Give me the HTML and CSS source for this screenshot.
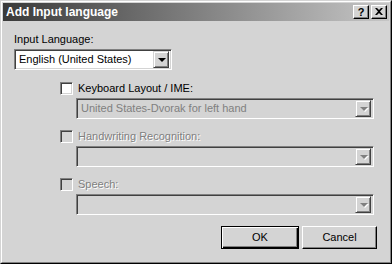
FILE: index.html
```html
<!DOCTYPE html>
<html>
<head>
<meta charset="utf-8">
<link rel="stylesheet" href="styles.css">
</head>
<body>
<div class="window">
  <div class="frame">
    <div class="titlebar">
      <span class="title">Add Input language</span>
      <div class="caption-btns">
        <div class="cap-btn">?</div>
        <div class="cap-btn close">
          <svg width="8" height="7" viewBox="0 0 8 7"><path d="M0 0h2l2 2 2-2h2L5 3.5 8 7H6L4 5 2 7H0l3-3.5z" fill="#000"/></svg>
        </div>
      </div>
    </div>
    <div class="content">
      <div class="label">Input Language:</div>
      <div class="combo lang">
        <span class="combo-text">English (United States)</span>
        <div class="drop"><span class="arrow"></span></div>
      </div>
      <div class="group">
        <div class="check-row">
          <span class="checkbox"></span>
          <span class="check-label">Keyboard Layout / IME:</span>
        </div>
        <div class="combo wide disabled">
          <span class="combo-text">United States-Dvorak for left hand</span>
          <div class="drop"><span class="arrow"></span></div>
        </div>
        <div class="check-row">
          <span class="checkbox disabled"></span>
          <span class="check-label disabled">Handwriting Recognition:</span>
        </div>
        <div class="combo wide disabled">
          <span class="combo-text"></span>
          <div class="drop"><span class="arrow"></span></div>
        </div>
        <div class="check-row">
          <span class="checkbox disabled"></span>
          <span class="check-label disabled">Speech:</span>
        </div>
        <div class="combo wide disabled">
          <span class="combo-text"></span>
          <div class="drop"><span class="arrow"></span></div>
        </div>
      </div>
      <div class="buttons">
        <div class="btn default"><span>OK</span></div>
        <div class="btn"><span>Cancel</span></div>
      </div>
    </div>
  </div>
</div>
</body>
</html>
```

FILE: styles.css
```css
* { box-sizing: border-box; }
html, body { margin: 0; padding: 0; }
body {
  width: 392px;
  height: 264px;
  background: #d4d4d4;
  font-family: "Liberation Sans", Arial, sans-serif;
  font-size: 11px;
  color: #000;
  overflow: hidden;
}
.window {
  width: 392px;
  height: 264px;
  border: 1px solid;
  border-color: #d4d4d4 #000 #000 #d4d4d4;
}
.frame {
  height: 100%;
  border: 1px solid;
  border-color: #fff #808080 #808080 #fff;
  padding: 1px;
  display: flex;
  flex-direction: column;
}
.titlebar {
  height: 18px;
  background: linear-gradient(to right, #3a3a3a, #c6c6c6);
  display: flex;
  align-items: center;
  justify-content: space-between;
  padding: 0 2px 0 3px;
}
.title {
  color: #fff;
  font-weight: bold;
  font-size: 12px;
  line-height: 18px;
}
.caption-btns {
  display: flex;
  gap: 2px;
}
.cap-btn {
  width: 16px;
  height: 14px;
  background: #d4d4d4;
  border: 1px solid;
  border-color: #fff #000 #000 #fff;
  box-shadow: inset -1px -1px #808080;
  display: flex;
  align-items: center;
  justify-content: center;
  font-weight: bold;
  font-size: 11px;
  line-height: 12px;
  padding-bottom: 1px;
}
.cap-btn.close { padding: 0 1px 1px 0; }
.content {
  flex: 1;
  display: flex;
  flex-direction: column;
  padding: 12px 14px 0 11px;
}
.label {
  line-height: 13px;
  height: 13px;
}
.combo {
  height: 21px;
  margin-top: 3px;
  background: #fff;
  border: 1px solid;
  border-color: #808080 #fff #fff #808080;
  box-shadow: inset 1px 1px #404040, inset -1px -1px #d4d4d4;
  display: flex;
  align-items: center;
  padding: 2px;
}
.combo.lang { width: 158px; }
.combo-text {
  flex: 1;
  padding-left: 2px;
  line-height: 15px;
  white-space: nowrap;
  overflow: hidden;
}
.drop {
  width: 16px;
  height: 17px;
  background: #d4d4d4;
  border: 1px solid;
  border-color: #d4d4d4 #404040 #404040 #d4d4d4;
  box-shadow: inset 1px 1px #fff, inset -1px -1px #808080;
  display: flex;
  align-items: center;
  justify-content: center;
}
.arrow {
  width: 0;
  height: 0;
  border-left: 4px solid transparent;
  border-right: 4px solid transparent;
  border-top: 4px solid #000;
  margin-left: 1px;
}
.combo.disabled { background: #d4d4d4; }
.combo.disabled .combo-text { color: #808080; }
.combo.disabled .arrow {
  border-top-color: #808080;
  filter: drop-shadow(1px 1px 0 #fff);
}
.group {
  display: flex;
  flex-direction: column;
  padding-left: 46px;
}
.check-row {
  display: flex;
  align-items: center;
  height: 13px;
  margin-top: 12px;
}
.group .check-row:not(:first-child) { margin-top: 11px; }
.checkbox {
  width: 13px;
  height: 13px;
  background: #fff;
  border: 1px solid;
  border-color: #808080 #fff #fff #808080;
  box-shadow: inset 1px 1px #404040, inset -1px -1px #d4d4d4;
  flex: none;
}
.checkbox.disabled { background: #d4d4d4; }
.check-label {
  margin-left: 5px;
  line-height: 13px;
}
.check-label.disabled {
  color: #808080;
  text-shadow: 1px 1px 0 #fff;
}
.group .combo {
  margin-left: 16px;
  width: 298px;
  margin-top: 3px;
}
.buttons {
  display: flex;
  justify-content: flex-end;
  gap: 3px;
  margin-top: 11px;
  margin-right: -2px;
}
.btn {
  width: 75px;
  height: 23px;
  background: #d4d4d4;
  border: 1px solid;
  border-color: #fff #000 #000 #fff;
  box-shadow: inset -1px -1px #808080;
  display: flex;
  align-items: center;
  justify-content: center;
  line-height: 13px;
}
.btn.default {
  width: 78px;
  border-color: #000;
  box-shadow: inset 1px 1px #fff, inset -1px -1px #000, inset -2px -2px #808080;
}
```
